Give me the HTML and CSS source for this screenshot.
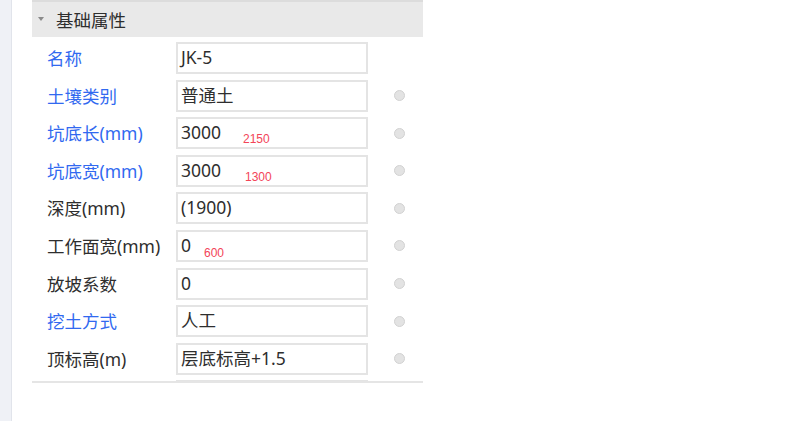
FILE: index.html
```html
<!DOCTYPE html>
<html lang="zh-CN">
<head>
<meta charset="utf-8">
<title>基础属性</title>
<link rel="stylesheet" href="styles.css">
</head>
<body>
<div class="page">
  <div class="side-strip"></div>
  <div class="panel">
    <div class="section-head">
      <span class="caret"></span>
      <span class="section-title">基础属性</span>
    </div>
    <div class="rows">
      <div class="row">
        <div class="label blue">名称</div>
        <div class="field"><div class="box">JK-5</div></div>
        <div class="dot-cell"></div>
      </div>
      <div class="row">
        <div class="label blue">土壤类别</div>
        <div class="field"><div class="box">普通土</div></div>
        <div class="dot-cell"><span class="dot"></span></div>
      </div>
      <div class="row">
        <div class="label blue">坑底长(mm)</div>
        <div class="field"><div class="box">3000<span class="note note-a">2150</span></div></div>
        <div class="dot-cell"><span class="dot"></span></div>
      </div>
      <div class="row">
        <div class="label blue">坑底宽(mm)</div>
        <div class="field"><div class="box">3000<span class="note note-b">1300</span></div></div>
        <div class="dot-cell"><span class="dot"></span></div>
      </div>
      <div class="row">
        <div class="label">深度(mm)</div>
        <div class="field"><div class="box">(1900)</div></div>
        <div class="dot-cell"><span class="dot"></span></div>
      </div>
      <div class="row">
        <div class="label">工作面宽(mm)</div>
        <div class="field"><div class="box">0<span class="note note-c">600</span></div></div>
        <div class="dot-cell"><span class="dot"></span></div>
      </div>
      <div class="row">
        <div class="label">放坡系数</div>
        <div class="field"><div class="box">0</div></div>
        <div class="dot-cell"><span class="dot"></span></div>
      </div>
      <div class="row">
        <div class="label blue">挖土方式</div>
        <div class="field"><div class="box">人工</div></div>
        <div class="dot-cell"><span class="dot"></span></div>
      </div>
      <div class="row">
        <div class="label">顶标高(m)</div>
        <div class="field"><div class="box">层底标高+1.5</div></div>
        <div class="dot-cell"><span class="dot"></span></div>
      </div>
      <div class="row">
        <div class="label"></div>
        <div class="field"><div class="box"></div></div>
        <div class="dot-cell"></div>
      </div>
    </div>
  </div>
</div>
</body>
</html>
```

FILE: styles.css
```css
html, body {
  margin: 0;
  padding: 0;
  background: #ffffff;
}

body {
  font-family: "Noto Sans", "Noto Sans CJK SC", sans-serif;
  color: #333333;
}

.page {
  display: flex;
  height: 421px;
  width: 809px;
  overflow: hidden;
}

.side-strip {
  width: 11px;
  flex: none;
  background: #eff1f6;
  border-right: 1px solid #e1e4eb;
}

.panel {
  margin-left: 20px;
  width: 391px;
  flex: none;
  display: flex;
  flex-direction: column;
  align-self: flex-start;
}

.section-head {
  height: 35px;
  border-top: 2px solid #dcdcdc;
  background: #e9e9e9;
  display: flex;
  align-items: center;
}

.caret {
  width: 0;
  height: 0;
  margin-left: 6px;
  margin-right: 12px;
  border-left: 3px solid transparent;
  border-right: 3px solid transparent;
  border-top: 4px solid #8a8a8a;
  margin-top: -2px;
}

.section-title {
  font-size: 17.5px;
  color: #2e2e2e;
  font-family: "Noto Sans CJK SC", sans-serif;
  margin-top: -1px;
}

.rows {
  height: 339px;
  padding-top: 5px;
  overflow: hidden;
  border-bottom: 2px solid #e5e5e5;
}

.row {
  display: flex;
  align-items: flex-start;
  height: 37.6px;
}

.label {
  flex: none;
  width: 129px;
  padding-left: 15px;
  font-size: 17.5px;
  line-height: 32px;
  color: #2e2e2e;
  white-space: nowrap;
}

.label.blue {
  color: #3169f0;
}

.field {
  width: 192px;
  flex: none;
}

.box {
  position: relative;
  box-sizing: border-box;
  height: 32px;
  border: 2px solid #e4e4e4;
  padding-left: 3px;
  font-size: 17.5px;
  line-height: 27px;
  color: #2e2e2e;
  white-space: nowrap;
}

.note {
  position: absolute;
  font-family: "Liberation Sans", sans-serif;
  font-size: 12px;
  line-height: 12px;
  color: #f34458;
}

.note-a { left: 65px; top: 14px; }
.note-b { left: 67px; top: 14px; }
.note-c { left: 26px; top: 15px; }

.dot-cell {
  flex: none;
  width: 55px;
  display: flex;
  align-items: center;
  height: 32px;
  padding-left: 26px;
  box-sizing: border-box;
}

.dot {
  width: 11px;
  height: 11px;
  box-sizing: border-box;
  border-radius: 50%;
  background: #e3e3e3;
  border: 1px solid #d2d2d2;
}
```
